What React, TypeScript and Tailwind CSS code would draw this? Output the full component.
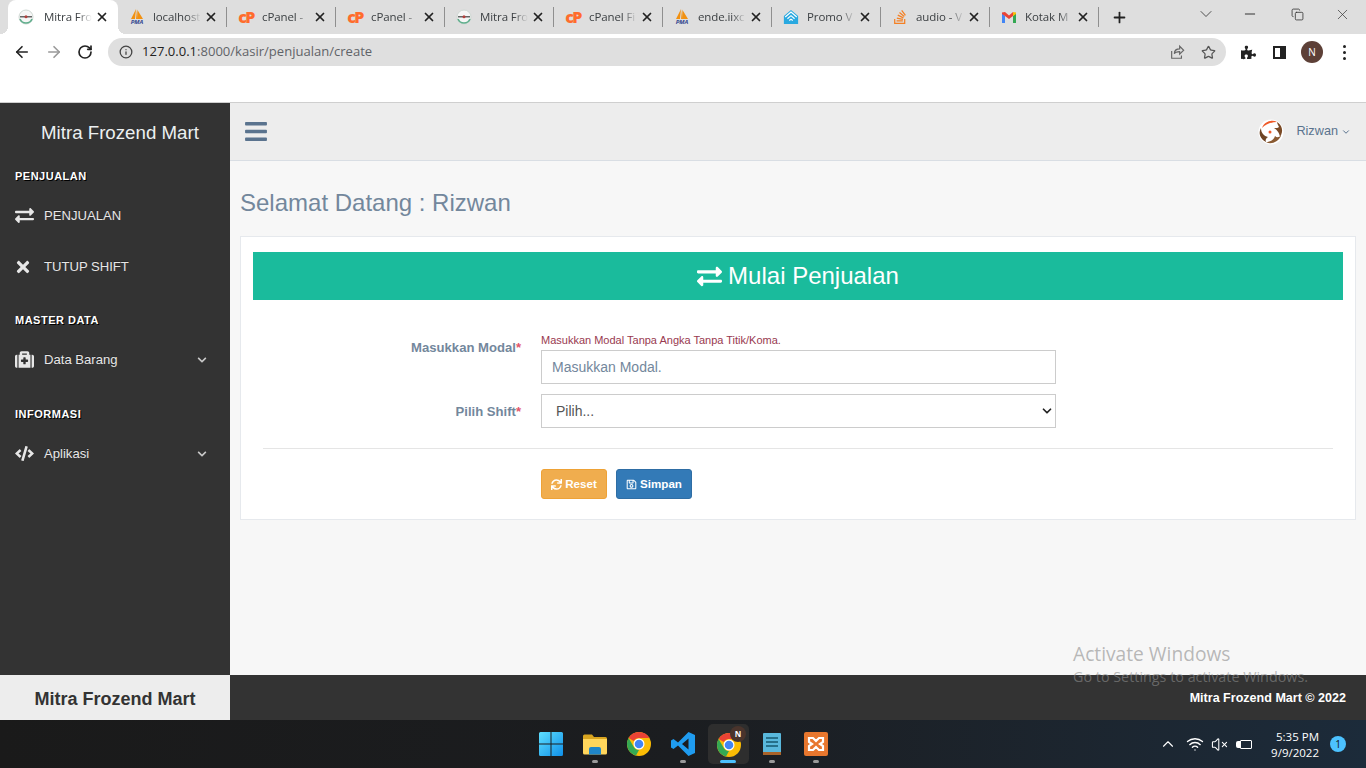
import React from 'react';
import { FaBars, FaChevronDown, FaCode, FaExchangeAlt, FaMedkit, FaPuzzlePiece, FaRegSave, FaStackOverflow, FaSync, FaTimes } from 'react-icons/fa';
import { LuArrowLeft, LuArrowRight, LuChevronDown, LuChevronUp, LuCopy, LuInfo, LuMinus, LuPlus, LuRotateCw, LuStar, LuVolumeX, LuWifi, LuX } from 'react-icons/lu';

const MitraFavicon = () => (
  <svg width="16" height="16" viewBox="0 0 16 16" fill="none">
    <circle cx="8" cy="8" r="7" fill="#f6f6f6" stroke="#cfd8d3" />
    <path d="M2 10a6.500 6.500 0 0 0 12 0" stroke="#5fae8c" strokeWidth="1.600" />
    <rect x="2" y="7" width="12" height="1.500" fill="#666" />
    <circle cx="8" cy="7.700" r="1.500" fill="#b3403c" />
  </svg>
);

const PmaFavicon = () => (
  <span className="flex flex-col items-center w-4 h-4 leading-none">
    <svg width="16" height="10" viewBox="0 0 16 10">
      <path d="M2 10 7 0l-1 10zM7 10l1-10 1 10zM9 10 8.500 1 14 10z" fill="#f29111" />
    </svg>
    <span className="text-[6px] font-bold italic text-[#33478f] leading-[6px]">PMA</span>
  </span>
);

const CpanelFavicon = () => (
  <span className="w-4 h-4 flex items-center justify-center font-black text-[16px] leading-none text-[#ff6c2c] tracking-[-1.5px]">cP</span>
);

const PromoFavicon = () => (
  <svg width="18" height="18" viewBox="0 0 18 18" fill="none">
    <path d="M9 1 1 8v9h16V8z" fill="#29a9e0" />
    <path d="M2.500 9 9 3.500 15.500 9M5 11l4-3.500 4 3.500M7 13l2-1.500 2 1.500" stroke="#fff" strokeWidth="1.300" />
  </svg>
);

const GmailFavicon = () => (
  <svg width="16" height="16" viewBox="0 0 16 16">
    <path d="M1 3.500V14h3V7z" fill="#4285f4" />
    <path d="M15 3.500V14h-3V7z" fill="#34a853" />
    <path d="M1 3.500 4 3l4 3.500L12 3v4L8 10 4 7 1 5z" fill="#ea4335" />
    <path d="M12 3l3 .5V5l-3 2z" fill="#fbbc04" />
  </svg>
);

const ChromeLogo = ({ size = 24 }: { size?: number }) => (
  <svg width={size} height={size} viewBox="0 0 24 24">
    <circle cx="12" cy="12" r="12" fill="#fbbc04" />
    <path d="M12 0a12 12 0 0 1 10.400 6H12a6 6 0 0 0-5.200 3L1.600 6A12 12 0 0 1 12 0z" fill="#ea4335" />
    <path d="M1.600 6l5.200 9a6 6 0 0 0 5.200 3l-3 5.600A12 12 0 0 1 1.600 6z" fill="#34a853" />
    <circle cx="12" cy="12" r="5.500" fill="#fff" />
    <circle cx="12" cy="12" r="4.300" fill="#4285f4" />
  </svg>
);

const tabs = [
  { title: 'Mitra Fro', icon: <MitraFavicon />, active: true },
  { title: 'localhost', icon: <PmaFavicon /> },
  { title: 'cPanel -', icon: <CpanelFavicon /> },
  { title: 'cPanel -', icon: <CpanelFavicon /> },
  { title: 'Mitra Fro', icon: <MitraFavicon /> },
  { title: 'cPanel Fi', icon: <CpanelFavicon /> },
  { title: 'ende.iixc', icon: <PmaFavicon /> },
  { title: 'Promo V', icon: <PromoFavicon /> },
  { title: 'audio - V', icon: <FaStackOverflow className="text-[#f48024] text-[16px]" /> },
  { title: 'Kotak M', icon: <GmailFavicon /> },
];

const BrowserChrome = () => (
  <div className="shrink-0 font-['Open_Sans',sans-serif]">
    {/* Tab strip */}
    <div className="h-[34px] bg-[#dedede] flex items-stretch pl-2 text-[#3c4043]">
      {tabs.map((tab, i) => (
        <div
          key={i}
          className={`relative flex items-center shrink-0 ${i === 0 ? 'w-[110px] pl-[10px] bg-white rounded-t-lg' : 'w-[109px] pl-[11px]'}`}
        >
          {i === 0 && <span className="absolute left-[-8px] bottom-0 w-2 h-2 bg-[radial-gradient(circle_at_0_0,#dedede_8px,#ffffff_8px)]"></span>}
          {i === 0 && <span className="absolute right-[-8px] bottom-0 w-2 h-2 bg-[radial-gradient(circle_at_100%_0,#dedede_8px,#ffffff_8px)]"></span>}
          <span className="w-4 flex justify-center shrink-0">{tab.icon}</span>
          <span className={`${i === 0 ? 'ml-[10px]' : 'ml-[8px]'} w-[48px] overflow-hidden whitespace-nowrap text-[11.500px] tracking-[-0.1px] [mask-image:linear-gradient(to_right,black_70%,transparent)]`}>
            {tab.title}
          </span>
          <LuX className="ml-[3px] w-[14px] h-[14px] shrink-0 text-[#222]" strokeWidth={3} />
          {i > 0 && <span className="ml-[8px] w-px h-5 bg-[#8f8f8f] shrink-0"></span>}
        </div>
      ))}
      <LuPlus className="ml-[12px] mt-[9px] w-[17px] h-[17px] text-[#222]" strokeWidth={2.500} />
      <div className="ml-auto flex items-start text-[#333]">
        <LuChevronDown className="w-5 h-5 mt-[4px] mr-[26px]" strokeWidth={1} />
        <LuMinus className="w-4 h-4 mt-[6px] mr-[33px]" strokeWidth={1.500} />
        <LuCopy className="w-[13px] h-[13px] mt-[8px] mr-[30px]" strokeWidth={1.500} />
        <LuX className="w-[17px] h-[17px] mt-[6px] mr-[15px]" strokeWidth={1} />
      </div>
    </div>

    {/* Toolbar */}
    <div className="h-[36px] bg-white flex items-center">
      <div className="flex items-center w-[108px] pl-[13px] gap-[14px]">
        <LuArrowLeft className="w-[18px] h-[18px] text-[#222]" strokeWidth={2.200} />
        <LuArrowRight className="w-[18px] h-[18px] text-[#999]" strokeWidth={2.200} />
        <LuRotateCw className="w-[16px] h-[16px] text-[#222]" strokeWidth={2.500} />
      </div>
      <div className="w-[1118px] h-[28px] bg-[#dfdfdf] rounded-full flex items-center pl-[11px] pr-[10px] text-[13.050px]">
        <LuInfo className="w-[14px] h-[14px] text-[#444]" strokeWidth={2.200} />
        <span className="ml-[9px] text-[#222]">127.0.0.1</span>
        <span className="text-[#5f6368]">:8000/kasir/penjualan/create</span>
        <svg className="ml-auto" width="16" height="16" viewBox="0 0 18 18" fill="none" stroke="#666" strokeWidth="1.300">
          <path d="M3 8v8h11v-3" />
          <path d="M6 11c0-4 3-5.500 6-5.500V2.500l4.500 4.500L12 11.500V8.500c-3 0-5 .5-6 2.500z" />
        </svg>
        <LuStar className="ml-[16px] w-[15px] h-[15px] text-[#555]" />
      </div>
      <FaPuzzlePiece className="ml-[15px] w-[15px] h-[15px] text-[#222]" />
      <span className="ml-[17px] w-[13px] h-[13px] border-2 border-[#222] border-r-[6px] box-border"></span>
      <span className="ml-[15px] w-[22px] h-[22px] rounded-full bg-[#5d4037] text-white text-[10px] flex items-center justify-center">N</span>
      <span className="ml-[20px] flex flex-col gap-[3px]">
        <span className="w-[3px] h-[3px] rounded-full bg-[#222]"></span>
        <span className="w-[3px] h-[3px] rounded-full bg-[#222]"></span>
        <span className="w-[3px] h-[3px] rounded-full bg-[#222]"></span>
      </span>
    </div>

    <div className="h-[32px] bg-white border-b border-[#cfcfcf] box-content"></div>
  </div>
);

const SectionTitle = ({ children }: { children: React.ReactNode }) => (
  <h3 className="pl-[15px] text-[11px] leading-[14px] font-bold tracking-[0.5px] uppercase text-white [text-shadow:1px_1px_#000]">
    {children}
  </h3>
);

const NavItem = ({ icon, label, chevron }: { icon: React.ReactNode; label: string; chevron?: boolean }) => (
  <div className="h-[51px] flex items-center pl-[15px] pr-[23px] text-[13.100px] text-[#e7e7e7] [text-shadow:rgba(0,0,0,0.25)_0_-1px_0]">
    <span className="w-[19px] flex justify-start shrink-0 text-[#e7e7e7]">{icon}</span>
    <span className="ml-[10px]">{label}</span>
    {chevron && <FaChevronDown className="ml-auto w-[10px] h-[10px] text-[#c8c8c8]" />}
  </div>
);

const Sidebar = () => (
  <aside className="w-[230px] shrink-0 bg-[#333333] flex flex-col">
    <div className="h-[57px] flex items-center pl-[41px] pt-[3px] text-[18.700px] text-[#ecf0f1]">Mitra Frozend Mart</div>
    <div className="mt-[9px]"><SectionTitle>Penjualan</SectionTitle></div>
    <div className="mt-[7px]">
      <NavItem icon={<FaExchangeAlt className="w-[19px] h-[19px] shrink-0" />} label="PENJUALAN" />
      <NavItem icon={<FaTimes className="w-[18px] h-[18px] -ml-[1px] shrink-0" />} label="TUTUP SHIFT" />
    </div>
    <div className="mt-[21px]"><SectionTitle>Master Data</SectionTitle></div>
    <div className="mt-[7px]">
      <NavItem icon={<FaMedkit className="w-[19px] h-[19px] shrink-0" />} label="Data Barang" chevron />
    </div>
    <div className="mt-[22px]"><SectionTitle>Informasi</SectionTitle></div>
    <div className="mt-[7px]">
      <NavItem icon={<FaCode className="w-[19px] h-[15px] shrink-0" />} label="Aplikasi" chevron />
    </div>
  </aside>
);

const KoiAvatar = () => (
  <svg width="26" height="26" viewBox="0 0 26 26" fill="none">
    <circle cx="13" cy="13" r="12.500" fill="#fff" />
    <path d="M4 9C6 3 14 0 19 3 14 3 8 5 4 9z" fill="#ef5a28" />
    <path d="M19 3c5 3 7 9 3 15-1-5-3-7-6-9 3 0 4 0 5-1-1-2-2-4-2-5z" fill="#7a4a26" />
    <path d="M23 17c-3 6-10 9-15 6 4 0 8-2 9-6 2 2 4 1 6 0z" fill="#8a5a32" />
    <path d="M8 23C2 20 0 14 3 9c0 5 3 8 7 9-2 1-3 3-2 5z" fill="#6e4424" />
    <circle cx="12" cy="13" r="1.500" fill="#ef5a28" />
  </svg>
);

const Topbar = () => (
  <div className="h-[58px] shrink-0 bg-[#ededed] border-b border-[#d9dee4] flex items-center pl-[15px] pr-[15px]">
    <FaBars className="w-[22px] h-[25px] text-[#5a738e]" />
    <div className="ml-auto flex items-center text-[#5a738e] text-[12.700px]">
      <KoiAvatar />
      <span className="ml-[12px] pt-[1px]">Rizwan</span>
      <LuChevronDown className="ml-[3px] w-[10px] h-[10px]" strokeWidth={2.400} />
    </div>
  </div>
);

const FormRow = ({ label, labelTop, children }: { label: string; labelTop: string; children: React.ReactNode }) => (
  <div className="flex items-start">
    <label className={`w-[268px] shrink-0 ${labelTop} text-right text-[13.100px] leading-[20px] font-bold text-[#73879c]`}>
      {label}<span className="text-[#e2556a]">*</span>
    </label>
    <div className="ml-[20px] w-[515px]">{children}</div>
  </div>
);

const Content = () => (
  <main className="flex-1 min-h-0 bg-[#f7f7f7] px-[10px] pt-[27px]">
    <h3 className="text-[24px] leading-[30px] text-[#73879c]">Selamat Datang : Rizwan</h3>
    <div className="mt-[18px] h-[284px] bg-white border border-[#e6e9ed] px-[12px] pt-[15px]">
      <div className="h-[48px] bg-[#1abb9c] flex items-center justify-center text-white text-[24px]">
        <FaExchangeAlt className="w-[25px] h-[25px] mr-[6px]" />
        Mulai Penjualan
      </div>

      <div className="mt-[36px] flex flex-col gap-[10px]">
        <FormRow label="Masukkan Modal" labelTop="pt-[2px]">
          <p className="text-[11px] leading-[13px] text-[#993a50] mb-[3px] -mt-[2px] whitespace-nowrap">Masukkan Modal Tanpa Angka Tanpa Titik/Koma.</p>
          <input
            readOnly
            placeholder="Masukkan Modal."
            className="w-full h-[34px] px-[10px] border border-[#ccc] bg-white text-[14px] text-[#555] placeholder:text-[#73879c] outline-none"
          />
        </FormRow>
        <FormRow label="Pilih Shift" labelTop="pt-[8px]">
          <div className="h-[34px] flex items-center px-[14px] border border-[#ccc] bg-white text-[14px] text-[#555]">
            <span>Pilih...</span>
            <LuChevronDown className="ml-auto -mr-[13px] w-[14px] h-[14px] text-[#222]" strokeWidth={3} />
          </div>
        </FormRow>
      </div>

      <hr className="mt-[20px] mx-[10px] border-0 border-t border-[#e5e5e5]" />

      <div className="mt-[20px] ml-[288px] flex gap-[9px] text-white text-[11.600px] font-bold">
        <button className="h-[30px] w-[66px] bg-[#f0ad4e] border border-[#eea236] rounded-[3px] flex items-center justify-center gap-[3px]">
          <FaSync className="w-[11px] h-[11px]" />
          Reset
        </button>
        <button className="h-[30px] w-[76px] bg-[#337ab7] border border-[#2e6da4] rounded-[3px] flex items-center justify-center gap-[3px]">
          <FaRegSave className="w-[11px] h-[11px]" />
          Simpan
        </button>
      </div>
    </div>
  </main>
);

const Footer = () => (
  <div className="h-[45px] shrink-0 flex">
    <div className="w-[230px] bg-[#ededed] flex items-center justify-center pt-[3px] text-[18px] font-bold text-[#333]">Mitra Frozend Mart</div>
    <div className="flex-1 bg-[#333333] flex items-center justify-end pr-[20px] pt-[1px] text-[12.550px] font-bold text-white">Mitra Frozend Mart © 2022</div>
  </div>
);

const TaskIcon = ({ children, dot }: { children: React.ReactNode; dot?: boolean }) => (
  <div className="w-[44px] h-full flex items-center justify-center relative">
    {children}
    {dot && <span className="absolute bottom-[5px] w-[6px] h-[3px] rounded-full bg-[#9a9a9a]"></span>}
  </div>
);

const Taskbar = () => (
  <div className="h-[48px] shrink-0 bg-gradient-to-r from-[#1a1a1a] via-[#1b1d20] to-[#1c2b3a] flex items-center font-['Open_Sans',sans-serif] text-white">
    <div className="ml-[529px] flex items-center h-full">
      <TaskIcon>
        <svg width="24" height="24" viewBox="0 0 24 24">
          <defs>
            <linearGradient id="winGrad" x1="0" y1="0" x2="1" y2="1">
              <stop offset="0" stopColor="#5fe0ff" />
              <stop offset="1" stopColor="#0f8fe8" />
            </linearGradient>
          </defs>
          <path d="M0 1.500A1.500 1.500 0 0 1 1.500 0h10v11.500H0zM12.500 0h10A1.500 1.500 0 0 1 24 1.500v10H12.500zM0 12.500h11.500V24h-10A1.500 1.500 0 0 1 0 22.500zM12.500 12.500H24v10a1.500 1.500 0 0 1-1.500 1.500h-10z" fill="url(#winGrad)" />
        </svg>
      </TaskIcon>
      <TaskIcon dot>
        <svg width="24" height="24" viewBox="0 0 24 24">
          <path d="M0 4a1.500 1.500 0 0 1 1.500-1.500H9L11 5h11.500A1.500 1.500 0 0 1 24 6.500V10H0z" fill="#d9a520" />
          <path d="M0 7h24v14a1.500 1.500 0 0 1-1.500 1.500h-21A1.500 1.500 0 0 1 0 21z" fill="#ffd65c" />
          <path d="M6 17a2 2 0 0 1 2-2h8a2 2 0 0 1 2 2v5.500H6z" fill="#1f86c9" />
        </svg>
      </TaskIcon>
      <TaskIcon><ChromeLogo /></TaskIcon>
      <TaskIcon dot>
        <svg width="24" height="24" viewBox="0 0 24 24">
          <path d="M17.500 0 24 3v18l-6.500 3L7 13.500l-4.500 3.500L0 15.500v-7L2.500 7 7 10.500zM17.500 6.500 11 12l6.500 5.500z" fill="#1f9cf0" fillRule="evenodd" />
        </svg>
      </TaskIcon>
      <div className="w-[41px] h-[40px] ml-[3px] mr-[1px] bg-[#2e2e2e] rounded-[5px] flex items-center justify-center relative">
        <span className="mt-[2px]"><ChromeLogo /></span>
        <span className="absolute top-[2px] right-[3px] w-[16px] h-[16px] rounded-full bg-[#4a342c] text-[8px] font-bold flex items-center justify-center">N</span>
        <span className="absolute bottom-[1px] left-[12px] w-[16px] h-[3px] rounded-full bg-[#4cc2ff]"></span>
      </div>
      <TaskIcon dot>
        <svg width="24" height="24" viewBox="0 0 24 24">
          <rect x="3" y="1" width="18" height="22" rx="1" fill="#59b8dc" />
          <rect x="3" y="20" width="18" height="3" fill="#a8632a" />
          <path d="M6 6h12M6 10h12M6 14h12" stroke="#16586f" strokeWidth="1.500" />
        </svg>
      </TaskIcon>
      <TaskIcon dot>
        <svg width="24" height="24" viewBox="0 0 24 24" fill="none">
          <rect width="24" height="24" rx="2" fill="#e8772e" />
          <path d="M5 6h4l3 3 3-3h4v4l-3 2 3 2v4h-4l-3-3-3 3H5v-4l3-2-3-2z" stroke="#fff" strokeWidth="2.200" />
        </svg>
      </TaskIcon>
    </div>

    {/* Tray */}
    <div className="ml-auto flex items-center pr-[20px]">
      <LuChevronUp className="w-[18px] h-[18px]" strokeWidth={1.500} />
      <LuWifi className="ml-[9px] w-[18px] h-[18px]" strokeWidth={1.800} />
      <LuVolumeX className="ml-[7px] w-[17px] h-[17px]" strokeWidth={1.500} />
      <span className="ml-[8px] flex items-center">
        <span className="w-[4px] h-[7px] bg-white rounded-l-[2px]"></span>
        <span className="w-[12px] h-[9px] border border-white rounded-[1px]"></span>
      </span>
      <div className="ml-[1px] w-[66px] pt-[1px] text-right text-[11.500px] leading-[16px]">
        <div>5:35 PM</div>
        <div>9/9/2022</div>
      </div>
      <span className="ml-[11px] w-[16px] h-[16px] rounded-full bg-[#4cc2ff] text-[#111] text-[10px] flex items-center justify-center">1</span>
    </div>
  </div>
);

export default function App() {
  return (
    <div className="relative w-[1366px] h-[768px] overflow-hidden flex flex-col font-['Liberation_Sans',Arial,sans-serif]">
      <BrowserChrome />
      <div className="flex-1 min-h-0 flex">
        <Sidebar />
        <div className="flex-1 min-w-0 flex flex-col">
          <Topbar />
          <Content />
        </div>
      </div>
      <Footer />
      <Taskbar />

      {/* Windows watermark sits over the page */}
      <div className="absolute left-[1073px] top-[641px] font-['Open_Sans',sans-serif] text-[#8c8c8c]/60 pointer-events-none">
        <div className="text-[19.200px] leading-[26px]">Activate Windows</div>
        <div className="text-[14.350px] leading-[20px] mt-[0px]">Go to Settings to activate Windows.</div>
      </div>
    </div>
  );
}
